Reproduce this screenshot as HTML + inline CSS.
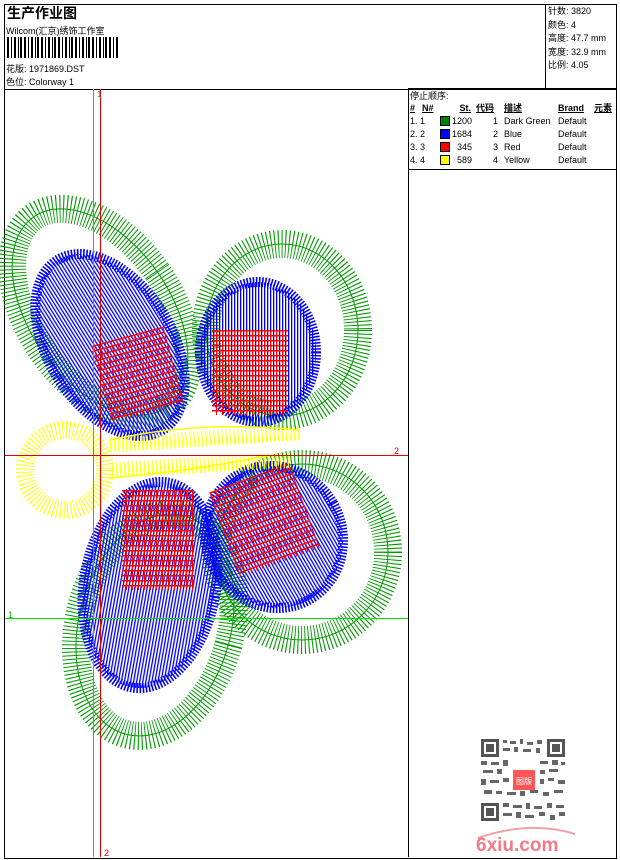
<!DOCTYPE html>
<html><head><meta charset="utf-8"><style>
html,body{margin:0;padding:0;background:#fff;}
body{width:620px;height:860px;position:relative;overflow:hidden;font-family:"Liberation Sans","Noto Sans CJK SC",sans-serif;font-size:9px;color:#000;}
.a{position:absolute;white-space:nowrap;}
.b{position:absolute;border:1px solid #000;}
table{border-collapse:collapse;font-size:9px;}
td{padding:0 1px;height:13px;overflow:hidden;}
.sw{display:inline-block;width:8px;height:8px;border:1px solid #000;vertical-align:-1px;}
</style></head><body>
<div class="b" style="left:4px;top:4px;width:611px;height:853px;"></div>
<div class="b" style="left:4px;top:4px;width:611px;height:84px;"></div>
<div class="b" style="left:545px;top:4px;width:70px;height:84px;"></div>
<div class="b" style="left:408px;top:88px;width:207px;height:80px;"></div>
<div class="b" style="left:408px;top:88px;width:0;height:769px;border-width:0 0 0 1px;"></div>
<div class="a" style="left:7px;top:3px;font-size:14px;font-weight:bold;">生产作业图</div>
<div class="a" style="left:6px;top:24px;font-size:9px;">Wilcom(汇京)绣饰工作室</div>
<svg class="a" style="left:7px;top:37px" width="112" height="21">
<g fill="#000">
<rect x="0" y="0" width="2" height="21"/><rect x="4" y="0" width="1" height="21"/><rect x="7" y="0" width="2" height="21"/><rect x="11" y="0" width="1" height="21"/><rect x="13" y="0" width="2" height="21"/><rect x="17" y="0" width="2" height="21"/><rect x="21" y="0" width="1" height="21"/><rect x="24" y="0" width="2" height="21"/><rect x="28" y="0" width="1" height="21"/><rect x="30" y="0" width="2" height="21"/><rect x="34" y="0" width="2" height="21"/><rect x="38" y="0" width="1" height="21"/><rect x="41" y="0" width="2" height="21"/><rect x="45" y="0" width="1" height="21"/><rect x="47" y="0" width="2" height="21"/><rect x="51" y="0" width="2" height="21"/><rect x="55" y="0" width="1" height="21"/><rect x="58" y="0" width="2" height="21"/><rect x="62" y="0" width="1" height="21"/><rect x="64" y="0" width="2" height="21"/><rect x="68" y="0" width="2" height="21"/><rect x="72" y="0" width="1" height="21"/><rect x="75" y="0" width="2" height="21"/><rect x="79" y="0" width="1" height="21"/><rect x="81" y="0" width="2" height="21"/><rect x="85" y="0" width="2" height="21"/><rect x="89" y="0" width="1" height="21"/><rect x="92" y="0" width="2" height="21"/><rect x="96" y="0" width="1" height="21"/><rect x="98" y="0" width="2" height="21"/><rect x="102" y="0" width="2" height="21"/><rect x="106" y="0" width="1" height="21"/><rect x="109" y="0" width="2" height="21"/>
</g></svg>
<div class="a" style="left:6px;top:62px;">花版: 1971869.DST</div>
<div class="a" style="left:6px;top:75px;">色位: Colorway 1</div>
<div class="a" style="left:548px;top:5px;line-height:13.5px;">针数: 3820<br>颜色: 4<br>高度: 47.7 mm<br>宽度: 32.9 mm<br>比例: 4.05</div>
<div class="a" style="left:410px;top:89px;">停止顺序:</div>
<table class="a" style="left:409px;top:101px;width:206px;table-layout:fixed;">
<col style="width:12px"><col style="width:18px"><col style="width:36px"><col style="width:28px"><col style="width:54px"><col style="width:36px"><col>
<tr style="font-weight:bold;text-decoration:underline"><td>#</td><td>N#</td><td style="text-align:right;padding-right:4px">St.</td><td>代码</td><td>描述</td><td>Brand</td><td>元素</td></tr>
<tr><td colspan="2">1. 1</td><td style="text-align:right;padding-right:3px"><span class="sw" style="background:#008000;float:left;margin-left:0px"></span>1200</td><td style="text-align:right;padding-right:5px">1</td><td>Dark Green</td><td>Default</td><td></td></tr>
<tr><td colspan="2">2. 2</td><td style="text-align:right;padding-right:3px"><span class="sw" style="background:#0000ff;float:left;margin-left:0px"></span>1684</td><td style="text-align:right;padding-right:5px">2</td><td>Blue</td><td>Default</td><td></td></tr>
<tr><td colspan="2">3. 3</td><td style="text-align:right;padding-right:3px"><span class="sw" style="background:#ff0000;float:left;margin-left:0px"></span>345</td><td style="text-align:right;padding-right:5px">3</td><td>Red</td><td>Default</td><td></td></tr>
<tr><td colspan="2">4. 4</td><td style="text-align:right;padding-right:3px"><span class="sw" style="background:#ffff00;float:left;margin-left:0px"></span>589</td><td style="text-align:right;padding-right:5px">4</td><td>Yellow</td><td>Default</td><td></td></tr>
</table>
<svg class="a" style="left:0;top:0" width="620" height="860">
<defs>
<pattern id="hb" width="3" height="3" patternUnits="userSpaceOnUse"><rect x="0" y="0" width="1.3" height="3" fill="#00f"/></pattern>
<pattern id="hr" width="6" height="5" patternUnits="userSpaceOnUse"><rect x="0" y="0" width="6" height="1.5" fill="#f00"/><rect x="0" y="0" width="1" height="5" fill="#f00"/></pattern>
</defs>
<g fill="none">
<g stroke="#009900">
<ellipse cx="100" cy="312" rx="70" ry="116" transform="rotate(-35 100 312)" stroke-width="28" stroke-dasharray="1 2.5"/>
<ellipse cx="100" cy="312" rx="70" ry="116" transform="rotate(-35 100 312)" stroke-width="1"/>
<ellipse cx="282" cy="330" rx="76" ry="86" stroke-width="28" stroke-dasharray="1 2.5"/>
<ellipse cx="282" cy="330" rx="76" ry="86" stroke-width="1"/>
<ellipse cx="155" cy="625" rx="76" ry="113" transform="rotate(15 155 625)" stroke-width="28" stroke-dasharray="1 2.5"/>
<ellipse cx="155" cy="625" rx="76" ry="113" transform="rotate(15 155 625)" stroke-width="1"/>
<ellipse cx="302" cy="552" rx="86" ry="88" stroke-width="28" stroke-dasharray="1 2.5"/>
<ellipse cx="302" cy="552" rx="86" ry="88" stroke-width="1"/>
</g>
<g stroke="#0000ff">
<ellipse cx="110" cy="345" rx="62" ry="100" transform="rotate(-32 110 345)" fill="url(#hb)" stroke-width="10" stroke-dasharray="1.5 1.5"/>
<ellipse cx="258" cy="352" rx="58" ry="70" fill="url(#hb)" stroke-width="10" stroke-dasharray="1.5 1.5"/>
<ellipse cx="150" cy="585" rx="66" ry="104" transform="rotate(10 150 585)" fill="url(#hb)" stroke-width="10" stroke-dasharray="1.5 1.5"/>
<ellipse cx="274" cy="537" rx="68" ry="72" transform="rotate(-30 274 537)" fill="url(#hb)" stroke-width="10" stroke-dasharray="1.5 1.5"/>
</g>
<rect x="100" y="335" width="75" height="80" transform="rotate(-15 137 375)" fill="url(#hr)"/>
<rect x="212" y="330" width="76" height="85" fill="url(#hr)"/>
<rect x="122" y="490" width="72" height="100" fill="url(#hr)"/>
<rect x="222" y="475" width="85" height="90" transform="rotate(-20 265 520)" fill="url(#hr)"/>
<g stroke="#ffff00">
<circle cx="65" cy="470" r="40" stroke-width="18" stroke-dasharray="1 2.5"/>
<path d="M110 445 L300 432 M112 470 L290 460" stroke-width="16" stroke-dasharray="1 3"/>
<path d="M110 440 Q200 420 300 430 M110 478 Q200 470 270 455" stroke-width="1.5"/>
</g>
<line x1="93.5" y1="89" x2="93.5" y2="857" stroke="#00e000"/>
<line x1="100.5" y1="89" x2="100.5" y2="857" stroke="#e00000"/>
<line x1="5" y1="455.5" x2="408" y2="455.5" stroke="#e00000"/>
<line x1="5" y1="618.5" x2="408" y2="618.5" stroke="#00e000"/>
</g>
<text x="97" y="97" font-size="9" fill="#00c000" font-family="Liberation Sans">1</text>
<text x="394" y="454" font-size="9" fill="#e00000" font-family="Liberation Sans">2</text>
<text x="8" y="618" font-size="9" fill="#00c000" font-family="Liberation Sans">1</text>
<text x="104" y="856" font-size="9" fill="#e00000" font-family="Liberation Sans">2</text>
<g fill="#555">
<rect x="481" y="739" width="84" height="82" fill="#fff"/>
<g fill="#666">
<rect x="503" y="740" width="4" height="3"/><rect x="510" y="741" width="6" height="3"/><rect x="520" y="739" width="3" height="5"/><rect x="527" y="742" width="6" height="3"/><rect x="537" y="740" width="5" height="4"/>
<rect x="503" y="748" width="7" height="3"/><rect x="514" y="747" width="4" height="5"/><rect x="523" y="749" width="8" height="3"/><rect x="536" y="748" width="4" height="5"/>
<rect x="481" y="761" width="6" height="4"/><rect x="491" y="762" width="8" height="3"/><rect x="503" y="760" width="5" height="6"/><rect x="540" y="761" width="8" height="3"/><rect x="552" y="760" width="6" height="5"/><rect x="561" y="762" width="4" height="3"/>
<rect x="483" y="770" width="10" height="3"/><rect x="497" y="769" width="5" height="5"/><rect x="540" y="770" width="5" height="4"/><rect x="549" y="769" width="9" height="3"/>
<rect x="481" y="779" width="5" height="6"/><rect x="490" y="780" width="9" height="3"/><rect x="503" y="778" width="6" height="4"/><rect x="540" y="779" width="4" height="5"/><rect x="548" y="778" width="6" height="3"/><rect x="558" y="780" width="7" height="4"/>
<rect x="484" y="790" width="8" height="4"/><rect x="496" y="791" width="6" height="3"/><rect x="507" y="792" width="9" height="3"/><rect x="520" y="791" width="5" height="5"/><rect x="530" y="790" width="8" height="3"/><rect x="543" y="792" width="6" height="4"/><rect x="554" y="790" width="9" height="3"/>
<rect x="503" y="803" width="6" height="4"/><rect x="513" y="805" width="9" height="3"/><rect x="526" y="803" width="4" height="6"/><rect x="534" y="806" width="8" height="3"/><rect x="547" y="803" width="5" height="5"/><rect x="556" y="805" width="8" height="3"/>
<rect x="503" y="813" width="9" height="3"/><rect x="516" y="812" width="5" height="6"/><rect x="525" y="815" width="9" height="3"/><rect x="539" y="812" width="6" height="4"/><rect x="550" y="815" width="5" height="5"/><rect x="559" y="812" width="6" height="4"/>
</g>
<rect x="481" y="739" width="18" height="18"/><rect x="484" y="742" width="12" height="12" fill="#fff"/><rect x="486" y="744" width="8" height="8"/>
<rect x="547" y="739" width="18" height="18"/><rect x="550" y="742" width="12" height="12" fill="#fff"/><rect x="552" y="744" width="8" height="8"/>
<rect x="481" y="803" width="18" height="18"/><rect x="484" y="806" width="12" height="12" fill="#fff"/><rect x="486" y="808" width="8" height="8"/>
</g>
<rect x="513" y="770" width="22" height="20" fill="#f55"/>
<text x="524" y="784" font-size="8" fill="#fff" text-anchor="middle" font-family="Noto Sans CJK SC,sans-serif">图版</text>
<path d="M478 838 Q530 820 575 834" stroke="#f3a0a8" stroke-width="2" fill="none"/>
<text x="476" y="851" font-size="19" font-weight="bold" fill="#f27a86" font-family="Liberation Sans">6xiu.com</text>
</svg>
</body></html>
